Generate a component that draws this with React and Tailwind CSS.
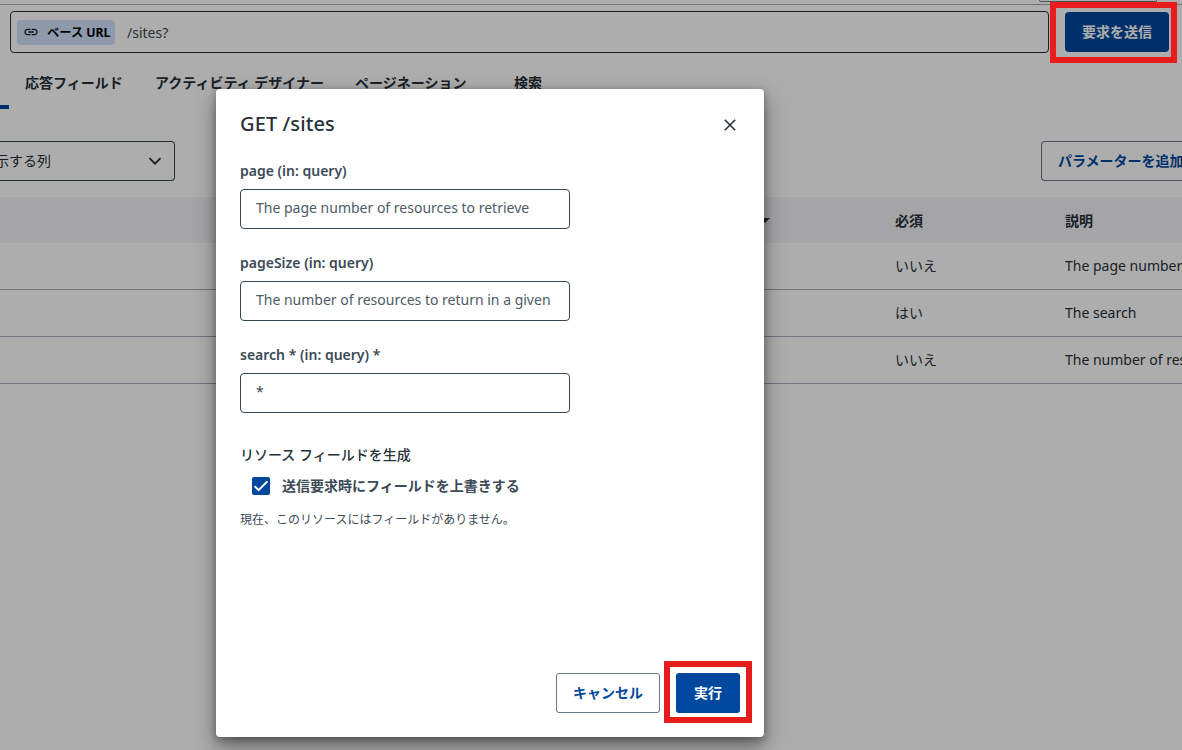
function LinkIcon() {
  return (
    <svg viewBox="0 0 24 24" className="h-4 w-4 shrink-0" fill="#10161d">
      <path d="M3.9 12c0-1.71 1.39-3.1 3.1-3.1h4V7H7c-2.76 0-5 2.24-5 5s2.24 5 5 5h4v-1.9H7c-1.71 0-3.1-1.39-3.1-3.1zM8 13h8v-2H8v2zm9-6h-4v1.9h4c1.71 0 3.1 1.39 3.1 3.1s-1.39 3.1-3.1 3.1h-4V17h4c2.76 0 5-2.24 5-5s-2.24-5-5-5z" />
    </svg>
  );
}

const rows = [
  { required: "いいえ", description: "The page number of resources to retrieve" },
  { required: "はい", description: "The search" },
  { required: "いいえ", description: "The number of resources to return in a given page" },
];

function Page() {
  return (
    <div className="h-full w-full overflow-hidden bg-white text-sm text-[#273139]">
      <div className="flex h-[5px] justify-end border-b border-[#a3adb8] pr-[25px]">
        <div className="h-[2px] w-[118px] rounded-b border border-t-0 border-[#6b7884]" />
      </div>
      <div className="flex pt-[6px] pl-[10px]">
        <div className="flex h-[42px] w-[1039px] items-center rounded border border-[#273139] pl-[6px]">
          <div className="flex h-[25px] w-[98px] items-center rounded bg-[#d3e2fe] pl-[6px]">
            <LinkIcon />
            <span className="ml-2 pt-px text-[12.25px] leading-5 font-bold whitespace-nowrap text-black">ベース URL</span>
          </div>
          <span className="ml-3 pt-[2px] leading-5 text-[#3b4752]">/sites?</span>
        </div>
        <button className="mt-px ml-4 h-10 w-[104px] rounded bg-[#00489d] font-bold text-white">要求を送信</button>
      </div>
      <div className="flex h-14 pl-[25px] leading-5 font-semibold whitespace-nowrap">
        <span className="mt-5 w-[130px]">応答フィールド</span>
        <span className="mt-5 w-[200px]">アクティビティ デザイナー</span>
        <span className="mt-5 w-[159px]">ページネーション</span>
        <span className="mt-5">検索</span>
      </div>
      <div className="-mt-1 h-1 w-[9px] bg-[#00489d]" />
      <div className="mt-8 flex justify-between">
        <div className="flex h-10 w-[175px] items-center justify-between rounded-r border border-l-0 border-[#37474f] pr-3">
          <span className="-ml-[5px] whitespace-nowrap">示する列</span>
          <svg viewBox="0 0 14 14" className="h-[14px] w-[14px]" fill="none" stroke="#273139" strokeWidth="1.9">
            <path d="M1.5 4.2 7 9.7l5.5-5.5" />
          </svg>
        </div>
        <div className="flex h-10 w-[141px] items-center rounded-l border border-r-0 border-[#6b7884] pl-4">
          <span className="font-bold whitespace-nowrap text-[#00489d]">パラメーターを追加</span>
        </div>
      </div>
      <div className="mt-4 flex h-[46px] items-center bg-[#f4f4f7] leading-5 font-bold">
        <div className="flex w-[895px] justify-end pr-[125px]">
          <svg viewBox="0 0 10 5" className="h-[5px] w-[10px]" fill="#273139">
            <path d="M0 0h10L5 5z" />
          </svg>
        </div>
        <span className="w-[170px] pt-[2px]">必須</span>
        <span className="pt-[2px]">説明</span>
      </div>
      {rows.map((row, i) => (
        <div key={i} className="flex h-[47px] items-center border-b border-[#a3adb8] pl-[895px] leading-5 whitespace-nowrap">
          <span className="w-[170px] shrink-0">{row.required}</span>
          <span>{row.description}</span>
        </div>
      ))}
    </div>
  );
}

function Field({ label, placeholder, value }) {
  return (
    <label className="mb-6 flex h-[68px] flex-col">
      <span className="h-7 text-sm leading-5 font-semibold text-[#3b4a56]">{label}</span>
      <input
        className="h-10 w-[330px] shrink-0 rounded border border-[#37474f] px-[15px] pb-[3px] text-sm text-[#3b4a56] outline-none placeholder:text-[#4d5b67]"
        placeholder={placeholder}
        defaultValue={value}
      />
    </label>
  );
}

function Dialog() {
  return (
    <div className="flex h-[648px] w-[548px] flex-col rounded bg-white px-6 pb-6 text-sm text-[#273139] shadow-[0_11px_15px_-7px_rgba(0,0,0,0.2),0_9px_20px_3px_rgba(0,0,0,0.28),0_2px_6px_1px_rgba(0,0,0,0.22)]">
      <div className="flex h-[72px] items-center justify-between pr-1">
        <h2 className="pb-[3px] text-xl leading-7 font-medium tracking-[0.1px]">GET /sites</h2>
        <svg viewBox="0 0 12 12" className="h-3 w-3" fill="none" stroke="#273139" strokeWidth="1.6">
          <path d="m.8.8 10.4 10.4M11.2.8.8 11.2" />
        </svg>
      </div>
      <div className="flex-1">
        <Field label="page (in: query)" placeholder="The page number of resources to retrieve" />
        <Field label="pageSize (in: query)" placeholder="The number of resources to return in a given" />
        <Field label="search * (in: query) *" value="*" />
        <div className="mt-[32px] leading-5 font-medium">リソース フィールドを生成</div>
        <div className="mt-[11px] flex items-center pl-3">
          <span className="flex h-[18px] w-[18px] items-center justify-center rounded-[2px] bg-[#00489d]">
            <svg viewBox="0 0 18 18" className="h-[18px] w-[18px]" fill="none" stroke="#fff" strokeWidth="2">
              <path d="m2.6 9.2 4 4L15.4 4.4" />
            </svg>
          </span>
          <span className="ml-3 leading-5 font-bold text-[#3b4a56]">送信要求時にフィールドを上書きする</span>
        </div>
        <p className="mt-4 text-xs leading-4 text-[#3b4a56]">現在、このリソースにはフィールドがありません。</p>
      </div>
      <div className="flex justify-end gap-4">
        <button className="h-10 w-[104px] rounded-[3px] border border-[#6b7884] font-bold text-[#00489d]">キャンセル</button>
        <button className="h-10 w-16 rounded-[3px] bg-[#00489d] font-bold text-white">実行</button>
      </div>
    </div>
  );
}

export default function App() {
  return (
    <div className="relative h-[750px] w-[1182px] overflow-hidden font-['Noto_Sans','Noto_Sans_CJK_JP',sans-serif]">
      <Page />
      <div className="absolute inset-0 bg-black/32 pt-[89px] pl-[216px]">
        <Dialog />
      </div>
      <div className="absolute top-[2px] left-[1050px] h-[61px] w-[127px] border-6 border-[#e81c1c]" />
      <div className="absolute top-[661px] left-[664px] h-[62px] w-[88px] border-6 border-[#e81c1c]" />
    </div>
  );
}
